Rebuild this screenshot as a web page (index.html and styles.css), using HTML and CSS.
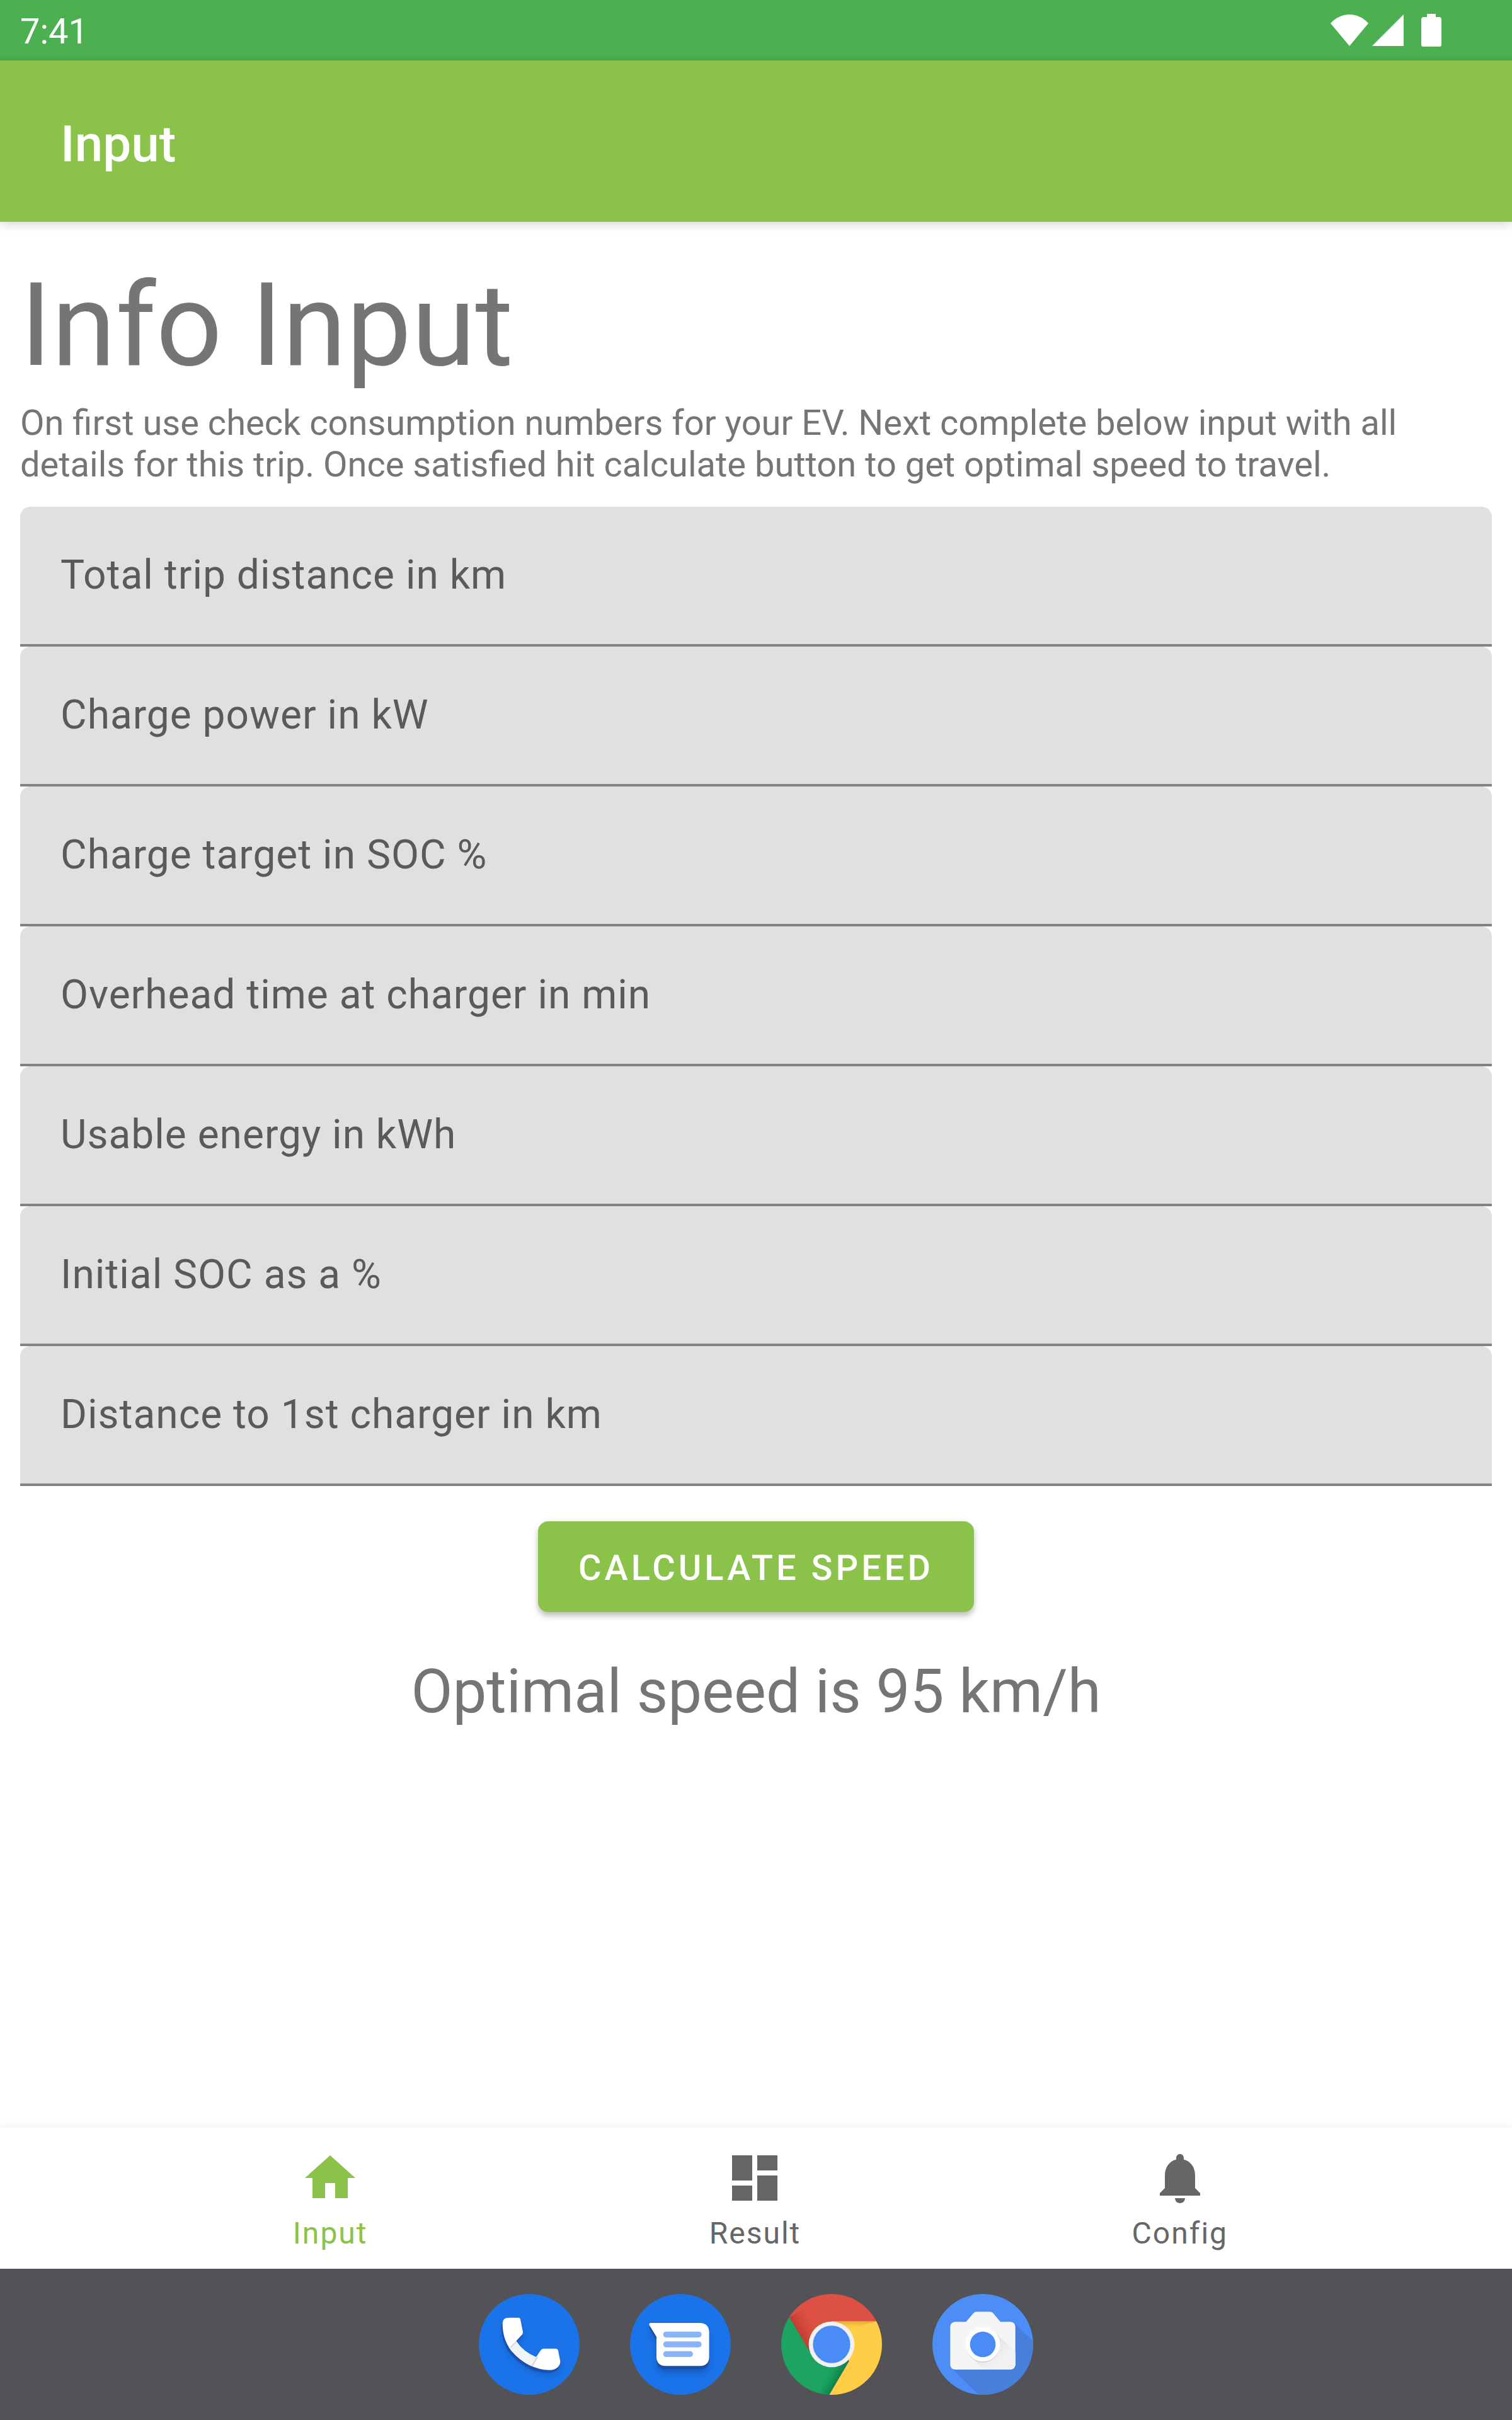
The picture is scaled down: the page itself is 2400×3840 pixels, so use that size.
FILE: index.html
```html
<!DOCTYPE html>
<html lang="en">
<head>
<meta charset="utf-8">
<meta name="viewport" content="width=device-width, initial-scale=1">
<title>Input</title>
<link rel="stylesheet" href="styles.css">
</head>
<body>
<div class="status-bar">
  <span class="clock">7:41</span>
  <div class="status-icons">
    <svg class="wifi" viewBox="0 0 60 50" aria-hidden="true"><path d="M30 50 0 14C8 5 19 0 30 0s22 5 30 14z"/></svg>
    <svg class="signal" viewBox="0 0 50 50" aria-hidden="true"><path d="M50 0v50H0z"/></svg>
    <svg class="battery" viewBox="0 0 32 52" aria-hidden="true"><path d="M9 0h14v5h5q4 0 4 4v40q0 3-3 3H3q-3 0-3-3V9q0-4 4-4h5z"/></svg>
  </div>
</div>

<header class="app-bar"><span class="app-title">Input</span></header>

<main class="content">
  <h1 class="heading">Info Input</h1>
  <p class="intro">On first use check consumption numbers for your EV. Next complete below input with all details for this trip. Once satisfied hit calculate button to get optimal speed to travel.</p>

  <form class="trip-form">
    <div class="field"><label for="trip">Total trip distance in km</label><input id="trip" type="text" inputmode="decimal"></div>
    <div class="field"><label for="power">Charge power in kW</label><input id="power" type="text" inputmode="decimal"></div>
    <div class="field"><label for="target">Charge target in SOC %</label><input id="target" type="text" inputmode="decimal"></div>
    <div class="field"><label for="overhead">Overhead time at charger in min</label><input id="overhead" type="text" inputmode="decimal"></div>
    <div class="field"><label for="energy">Usable energy in kWh</label><input id="energy" type="text" inputmode="decimal"></div>
    <div class="field"><label for="initial">Initial SOC as a %</label><input id="initial" type="text" inputmode="decimal"></div>
    <div class="field"><label for="first">Distance to 1st charger in km</label><input id="first" type="text" inputmode="decimal"></div>
    <button class="calculate" type="button">CALCULATE SPEED</button>
  </form>
  <p class="result">Optimal speed is 95 km/h</p>
</main>

<nav class="bottom-nav">
  <a class="nav-item active" href="#input">
    <svg viewBox="0 0 24 24" aria-hidden="true"><path d="M10 20v-6h4v6h5v-8h3L12 3 2 12h3v8z"/></svg>
    <span>Input</span>
  </a>
  <a class="nav-item" href="#result">
    <svg viewBox="0 0 24 24" aria-hidden="true"><path d="M3 13h8V3H3v10zm0 8h8v-6H3v6zm10 0h8V11h-8v10zm0-18v6h8V3h-8z"/></svg>
    <span>Result</span>
  </a>
  <a class="nav-item" href="#config">
    <svg viewBox="0 0 24 24" aria-hidden="true"><path d="M12 22c1.1 0 2-.9 2-2h-4c0 1.1.89 2 2 2zm6-6v-5c0-3.07-1.64-5.64-4.5-6.32V4c0-.83-.67-1.5-1.5-1.5s-1.5.67-1.5 1.5v.68C7.63 5.36 6 7.92 6 11v5l-2 2v1h16v-1l-2-2z"/></svg>
    <span>Config</span>
  </a>
</nav>

<div class="dock">
  <button class="dock-app" type="button" aria-label="Phone">
    <svg viewBox="0 0 480 480" aria-hidden="true">
      <defs>
        <filter id="soft" x="-30%" y="-30%" width="160%" height="160%"><feGaussianBlur stdDeviation="14"/></filter>
        <path id="handset" d="M141 113h48q8 0 9 8l12 60q1 8-5 14l-27 29q32 50 95 77l22-33q5-8 14-8h56q11 0 13 10l10 50q1 12-8 24-13 18-44 18-100-2-180-90c-32-42-43-85-43-134q2-25 28-25z"/>
        <clipPath id="handset-clip"><use href="#handset"/></clipPath>
      </defs>
      <circle cx="240" cy="240" r="240" fill="#1a73e8"/>
      <use href="#handset" y="24" fill="#174ea6" opacity=".45" filter="url(#soft)"/>
      <use href="#handset" x="-5" y="14" fill="#1750ae"/>
      <use href="#handset" fill="#fff"/>
      <g clip-path="url(#handset-clip)">
        <path d="M148 256 182 222 286 292 254 344 200 330z" fill="#f1f3f4"/>
        <path d="M150 256l32-32M254 342l26-44" stroke="#dadce0" stroke-width="8"/>
      </g>
    </svg>
  </button>
  <button class="dock-app" type="button" aria-label="Messages">
    <svg viewBox="0 0 480 480" aria-hidden="true">
      <defs><path id="bubble" d="M98 138h236q42 2 43 44v120q-2 38-42 41H168q-40-3-42-41v-98L93 150q-5-10 5-12z"/></defs>
      <circle cx="240" cy="240" r="240" fill="#1a73e8"/>
      <use href="#bubble" y="34" fill="#174ea6" opacity=".6" filter="url(#soft)"/>
      <use href="#bubble" y="15" fill="#174ea6"/>
      <use href="#bubble" fill="#fff"/>
      <path d="M172 193h155M172 240h155M172 286h114" stroke="#8ab4f8" stroke-width="28" stroke-linecap="round"/>
    </svg>
  </button>
  <button class="dock-app" type="button" aria-label="Chrome">
    <svg viewBox="0 0 480 480" aria-hidden="true">
      <defs>
        <clipPath id="disc"><circle cx="240" cy="240" r="240"/></clipPath>
        <linearGradient id="red-shade" gradientUnits="userSpaceOnUse" x1="88" y1="190" x2="170" y2="142"><stop stop-color="#b8392d" stop-opacity=".8"/><stop offset="1" stop-color="#db4437" stop-opacity="0"/></linearGradient>
        <linearGradient id="yellow-shade" x1="0" y1="0" x2="0" y2="1"><stop stop-color="#d99d28" stop-opacity=".8"/><stop offset="1" stop-color="#ffcd40" stop-opacity="0"/></linearGradient>
        <linearGradient id="green-shade" gradientUnits="userSpaceOnUse" x1="275" y1="405" x2="215" y2="372"><stop stop-color="#0b7340" stop-opacity=".8"/><stop offset="1" stop-color="#0f9d58" stop-opacity="0"/></linearGradient>
      </defs>
      <g clip-path="url(#disc)">
        <path d="M0 0h480v130H240L133 270 39 112 0 130z" fill="#dd5144"/>
        <path d="M39 112 133 270 180 240 210 132 120 60z" fill="url(#red-shade)"/>
        <path d="M39 112 0 130v350h229l88-155-77-85-107 30z" fill="#1da362"/>
        <path d="M317 325 229 480H120l80-150z" fill="url(#green-shade)"/>
        <path d="M240 130h240v350H229l94-160z" fill="#ffcd46"/>
        <path d="M240 130h215L330 166z" fill="url(#yellow-shade)"/>
      </g>
      <circle cx="240" cy="240" r="109" fill="#f1f1f1"/>
      <circle cx="240" cy="240" r="89" fill="#4b8bf5"/>
    </svg>
  </button>
  <button class="dock-app" type="button" aria-label="Camera">
    <svg viewBox="0 0 480 480" aria-hidden="true">
      <defs>
        <linearGradient id="body-shade" x1="0" y1="0" x2="1" y2="1"><stop stop-color="#d6d6d6"/><stop offset=".7" stop-color="#f1f1f1"/></linearGradient>
      </defs>
      <circle cx="240" cy="240" r="240" fill="#4d8df6"/>
      <path d="M390 139 480 224v256H220L91 352z" fill="#477fdb" clip-path="url(#disc)"/>
      <path d="M108 133h52l37-43q5-5 12-5h66q8 0 13 5l36 43h48q22 2 23 23v181q-2 22-24 23H108q-22-1-23-23V156q1-21 23-23z" fill="#f5f5f5"/>
      <path d="M298 182 395 275v62q-2 22-24 23H245l-63-63z" fill="url(#body-shade)"/>
      <circle cx="240" cy="246" r="80" fill="#c4c4c4" opacity=".7"/>
      <circle cx="240" cy="240" r="82" fill="#fff"/>
      <circle cx="240" cy="240" r="61" fill="#4b8bf5"/>
    </svg>
  </button>
</div>
</body>
</html>
```
FILE: styles.css
```css
* {
  box-sizing: border-box;
}

body {
  margin: 0;
  min-height: 100vh;
  display: flex;
  flex-direction: column;
  background: #fff;
  color: #757575;
  font-family: Roboto, "Liberation Sans", sans-serif;
  font-size: 56px;
  line-height: 66px;
}

h1,
p {
  margin: 0;
  font-weight: 400;
}

svg {
  display: block;
}

.status-bar {
  display: flex;
  align-items: center;
  justify-content: space-between;
  height: 96px;
  padding: 0 112px 0 32px;
  background: #4caf50;
  color: #fff;
}

.clock {
  padding-top: 4px;
}

.status-icons {
  display: flex;
  align-items: center;
  fill: #fff;
}

.wifi {
  width: 60px;
  height: 50px;
}

.signal {
  width: 50px;
  height: 50px;
  margin: 0 28px 0 6px;
}

.battery {
  width: 32px;
  height: 52px;
}

.app-bar {
  display: flex;
  align-items: center;
  height: 256px;
  padding: 10px 96px 0;
  background: #8bc34a;
  box-shadow: 0 4px 16px rgba(0, 0, 0, 0.16);
  color: #fff;
}

.app-title {
  font-size: 80px;
  font-weight: 500;
  line-height: 94px;
}

.content {
  flex: 1;
  padding: 56px 32px;
}

.heading {
  margin-bottom: 14px;
  font-size: 184px;
  line-height: 216px;
}

.intro {
  margin-bottom: 34px;
}

.trip-form {
  display: flex;
  flex-direction: column;
}

.field {
  display: grid;
  align-items: center;
  height: 222px;
  border-bottom: 4px solid #828282;
}

.field label,
.field input {
  grid-area: 1 / 1;
  font-size: 64px;
  letter-spacing: 1px;
}

.field label {
  z-index: 1;
  padding: 0 64px;
  color: #5a5a5a;
  pointer-events: none;
}

.field input {
  width: 100%;
  height: 100%;
  padding: 0 64px;
  border: 0;
  border-radius: 16px 16px 0 0;
  background: #e0e0e0;
  font-family: inherit;
}

.calculate {
  align-self: center;
  height: 144px;
  margin: 56px 0 70px;
  padding: 4px 64px 0;
  border: 0;
  border-radius: 16px;
  background: #8bc34a;
  box-shadow: 0 6px 10px rgba(0, 0, 0, 0.26);
  color: #fff;
  font: 500 56px/66px Roboto, "Liberation Sans", sans-serif;
  letter-spacing: 5px;
}

.result {
  font-size: 96px;
  line-height: 112px;
  text-align: center;
}

.bottom-nav {
  display: flex;
  height: 224px;
  padding: 0 190px 0 187px;
  background: #fff;
  box-shadow: 0 0 20px rgba(0, 0, 0, 0.07);
}

.nav-item {
  flex: 1;
  display: flex;
  flex-direction: column;
  align-items: center;
  gap: 12px;
  padding-top: 32px;
  color: #666;
  fill: currentColor;
  font-size: 48px;
  line-height: 56px;
  letter-spacing: 2px;
  text-decoration: none;
}

.nav-item svg {
  width: 96px;
  height: 96px;
}

.nav-item.active {
  color: #8bc34a;
}

.dock {
  position: relative;
  display: flex;
  align-items: center;
  justify-content: center;
  gap: 80px;
  height: 240px;
  background: #535257;
}

.dock-app {
  width: 160px;
  height: 160px;
  padding: 0;
  border: 0;
  border-radius: 50%;
  background: none;
}
```
